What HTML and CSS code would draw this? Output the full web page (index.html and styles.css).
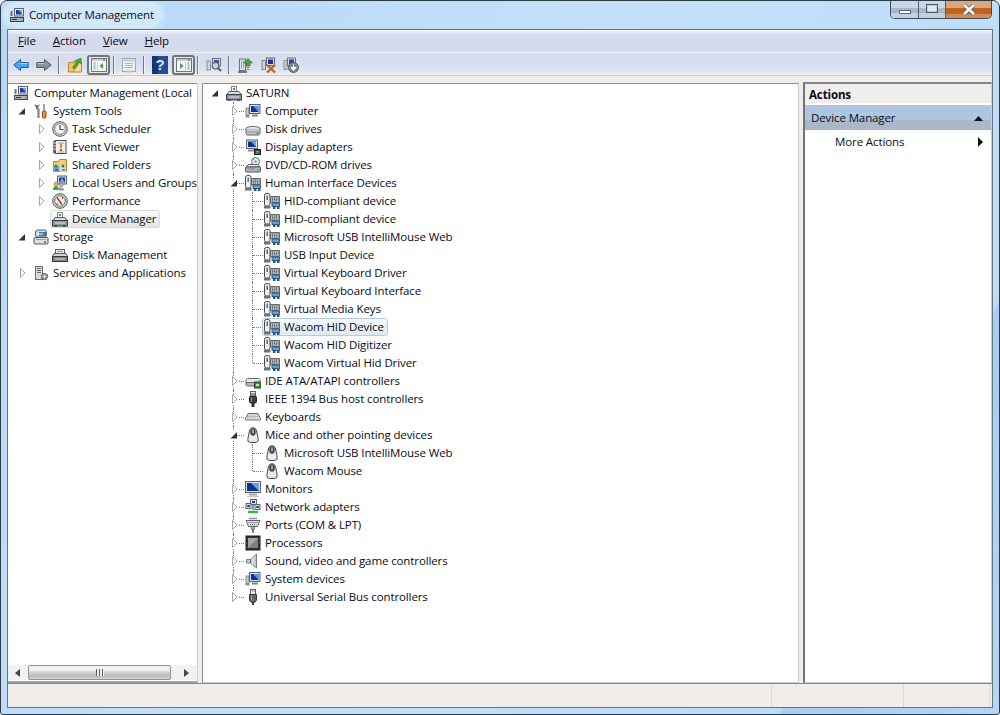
FILE: index.html
```html
<!DOCTYPE html>
<html lang="en">
<head>
<meta charset="utf-8">
<title>Computer Management</title>
<link rel="stylesheet" href="styles.css">
</head>
<body>
<svg class="defs" aria-hidden="true">
  <symbol id="exp-closed" viewBox="0 0 7 10"><path d="M1.5 .5v9l4.5-4.5z" fill="#fff" stroke="#a6a6a6"/></symbol>
  <symbol id="exp-open" viewBox="0 0 7 10"><path d="M7 2v6.5H.5z" fill="#333"/></symbol>
  <symbol id="i-pc" viewBox="0 0 16 16"><rect x="5.5" y="1.5" width="9" height="7.500" fill="#e6eaee" stroke="#5a6570"/><rect x="7" y="3" width="6" height="4.500" fill="#1b3da0"/><path d="M9 3h4v4z" fill="#6ea6e4"/><rect x="1.500" y="10.500" width="13" height="4" fill="#b0b4b8" stroke="#3c4248"/><path d="M3 12.500h5" stroke="#30353a"/><path d="M12 12.500h1" stroke="#4fbe4f"/><path d="M2.500 4v5" stroke="#6b7b6b" stroke-width="2"/></symbol>
  <symbol id="i-tools" viewBox="0 0 16 16"><path d="M4 2v3l1.500 1.500V15" fill="none" stroke="#7b838b" stroke-width="2.200"/><path d="M2 1.500 4 5 6.500 1.500" fill="none" stroke="#555d65"/><path d="M11 1v7" stroke="#8b9096" stroke-width="1.600"/><rect x="9.500" y="8" width="3.500" height="7" rx="1" fill="#ea962f" stroke="#8a4f10"/></symbol>
  <symbol id="i-clock" viewBox="0 0 16 16"><circle cx="8" cy="8" r="7.300" fill="#c8ced3" stroke="#565c62"/><circle cx="8" cy="8" r="5.300" fill="#f6f3e9" stroke="#8a8f94"/><path d="M8 4v4.500h3.500" fill="none" stroke="#4a4f55" stroke-width="1.200"/></symbol>
  <symbol id="i-viewer" viewBox="0 0 16 16"><rect x="3" y="1.500" width="11" height="13" fill="#eef0f2" stroke="#4a5058"/><rect x="1" y="2" width="3" height="12" fill="#5c6670"/><path d="M1 4h3M1 7h3M1 10h3" stroke="#d9dde0"/><path d="M6 4h6M6 13h6" stroke="#a0a6ac"/><path d="M9 4.500v4.500" stroke="#e08a1e" stroke-width="2"/><rect x="8" y="10" width="2" height="2" fill="#c8451b"/></symbol>
  <symbol id="i-share" viewBox="0 0 16 16"><path d="M1.500 4.500h5l1-2h7v12h-13z" fill="#f2cd6f" stroke="#ab8331"/><rect x="1" y="9" width="6" height="6" fill="#5fa8d8"/><rect x="8" y="9" width="6" height="6" fill="#e8d9a8"/><circle cx="4" cy="9" r="1.500" fill="#3e7f3e"/><circle cx="11" cy="9" r="1.500" fill="#2f6fa8"/><path d="M3 13h3M10 13h3" stroke="#1b4060"/></symbol>
  <symbol id="i-users" viewBox="0 0 16 16"><rect x="5.500" y="1" width="9" height="8" fill="#d5dade" stroke="#5a6570"/><rect x="7" y="2.500" width="6" height="5" fill="#1b3da0"/><path d="M7 7.500 10 3l3 4.500" fill="#6ea6e4"/><circle cx="4" cy="9" r="2" fill="#e3b58c" stroke="#7a5a3a" stroke-width=".5"/><path d="M1 15c0-3 1-4 3-4s3 1 3 4z" fill="#4a9a52"/><circle cx="9" cy="10" r="2" fill="#e3b58c" stroke="#7a5a3a" stroke-width=".5"/><path d="M6 15.500c0-2 1-3 3-3s3 1 3 3z" fill="#8a9cb4"/></symbol>
  <symbol id="i-perf" viewBox="0 0 16 16"><circle cx="8" cy="8" r="7.300" fill="#d7dadd" stroke="#4f555b"/><circle cx="8" cy="8" r="5.300" fill="#f4efe4" stroke="#6e747a"/><path d="M5 4.500 10 11.500" stroke="#b23a22" stroke-width="1.500"/><path d="M10.500 4v2M5 10v2" stroke="#555"/></symbol>
  <symbol id="i-dev" viewBox="0 0 16 16"><rect x="5.500" y="1.500" width="5" height="5" fill="#f4f6f4" stroke="#7c8a80"/><path d="M7 3h2v2H7z" fill="#3fa34d"/><path d="M3 6.500h10l2 3h-14z" fill="#d9dce0" stroke="#5c6268"/><rect x=".5" y="9.500" width="15" height="5.500" fill="#8f959b" stroke="#3b4046"/><path d="M3 12h10" stroke="#e0e3e6"/><path d="M2 15h3M11 15h3" stroke="#222" stroke-width="1.200"/></symbol>
  <symbol id="i-storage" viewBox="0 0 16 16"><rect x="2.500" y="1" width="11" height="7" rx="2" fill="#cfd6dc" stroke="#5b646c"/><path d="M6 3h7v4H6z" fill="#2f7fcf"/><path d="M4 5h6" stroke="#fff"/><rect x="1" y="8.500" width="14" height="6.500" rx="1" fill="#dde0e3" stroke="#4f565c"/><path d="M3 10.500h10" stroke="#9aa0a6"/><rect x="11" y="12" width="2" height="2" fill="#3fa34d"/></symbol>
  <symbol id="i-diskm" viewBox="0 0 16 16"><rect x="3.500" y="2.500" width="9" height="4" fill="#eceef0" stroke="#555c62"/><path d="M5 4.500h6" stroke="#9aa0a6"/><path d="M2 6.500h12l1.500 3H.5z" fill="#d2d5d8" stroke="#50565c"/><rect x=".5" y="9.500" width="15" height="5" fill="#7d8288" stroke="#33383d"/><path d="M3 12h10" stroke="#dfe2e5"/></symbol>
  <symbol id="i-services" viewBox="0 0 16 16"><rect x="2.500" y="1.500" width="7" height="13" fill="#d8dcdf" stroke="#646a70"/><path d="M4 3.500h4M4 5.500h4M4 7.500h4" stroke="#5f656b"/><circle cx="11.500" cy="11.500" r="3" fill="#a4a9ae" stroke="#53585d" stroke-width="1.500" stroke-dasharray="1.500 .8"/><circle cx="11.500" cy="11.500" r="1" fill="#fff"/></symbol>
  <symbol id="i-computer" viewBox="0 0 16 16"><rect x="4.500" y="1.500" width="10.500" height="9" fill="#dfe3e6" stroke="#59626b"/><rect x="6" y="3" width="7.500" height="6" fill="#0e2f9a"/><path d="M8 3h5.500v6z" fill="#5d97de"/><path d="M7 12.500h6" stroke="#7f868c" stroke-width="2"/><rect x="1" y="5" width="3" height="9" fill="#c8cdd1" stroke="#5d6369" stroke-width=".7"/><rect x="1.500" y="12" width="2" height="1.500" fill="#3fa34d"/></symbol>
  <symbol id="i-disk" viewBox="0 0 16 16"><ellipse cx="8" cy="7.500" rx="7" ry="2" fill="#eef0f2" stroke="#5f666c"/><path d="M1 7.500v5c0 1 1 1.500 2 1.500h10c1 0 2-.5 2-1.500v-5" fill="#c3c8cd" stroke="#5f666c"/><path d="M2 11h12" stroke="#8d9399"/><rect x="11.500" y="11.500" width="2" height="2" fill="#4ab05a"/></symbol>
  <symbol id="i-display" viewBox="0 0 16 16"><rect x="1.500" y="1" width="11" height="8.500" fill="#dfe3e6" stroke="#5b646c"/><rect x="3" y="2.500" width="8" height="5.500" fill="#0e2f9a"/><path d="M6 2.500h5V8z" fill="#6ba2e2"/><path d="M3 11.500h7" stroke="#8a9096" stroke-width="2"/><rect x="9.500" y="10.500" width="6" height="5" fill="#3c4b40" stroke="#1f2622"/><path d="M11 12.500h3M11 14h3" stroke="#57c06b"/></symbol>
  <symbol id="i-dvd" viewBox="0 0 16 16"><circle cx="10.500" cy="4.500" r="4" fill="#e4e8ea" stroke="#6a7178"/><circle cx="10.500" cy="4.500" r="1.200" fill="#59b0d8"/><path d="M8 2.500l2-1" stroke="#62b56b"/><path d="M3 7.500h10l2 2.500H1z" fill="#e8eaec" stroke="#5c6268"/><rect x=".5" y="10" width="15" height="5" rx="1" fill="#b9bec3" stroke="#4a5056"/><path d="M2 12h8" stroke="#70767c"/><rect x="12" y="12" width="2" height="1.500" fill="#3fa34d"/></symbol>
  <symbol id="i-hid" viewBox="0 0 16 16"><rect x=".5" y=".5" width="5.500" height="12.500" rx="1.800" fill="#f0f1f3" stroke="#44494f"/><path d="M3.200 2.500v4.500" stroke="#5f666d" stroke-width="1.500"/><rect x="0" y="13" width="6.500" height="2.500" fill="#6d7278"/><path d="M6.500 3.500h9v6h-9z" fill="#b4b8bc" stroke="#62686e"/><path d="M8 5h6.500M8 6.500h6.500M8 8h6.500" stroke="#565c62" stroke-dasharray="1 1"/><path d="M8 10h7.500v3.500H8z" fill="#6f9dc7" stroke="#285a8a"/><rect x="9" y="13.500" width="2.500" height="2.500" fill="#23537f"/><rect x="13" y="13.500" width="2.500" height="2.500" fill="#23537f"/></symbol>
  <symbol id="i-ide" viewBox="0 0 16 16"><path d="M1 7.500C1 6 2 5.500 3 5.500h10c1 0 2 .5 2 2v2H1z" fill="#e8ebee" stroke="#636a70"/><path d="M1 9.500h14v2c0 1-1 1.500-2 1.500H3c-1 0-2-.5-2-1.500z" fill="#b5babf" stroke="#636a70"/><rect x="9.500" y="9" width="6.500" height="6" fill="#3d9048" stroke="#1f4a26"/><path d="M11 11h3v2h-3z" fill="#d4e8a0"/></symbol>
  <symbol id="i-1394" viewBox="0 0 16 16"><rect x="5.500" y=".5" width="5" height="5" fill="#e3e6e8" stroke="#5a6066"/><path d="M7 2v2M9 2v2" stroke="#44494e"/><rect x="4.500" y="5" width="7" height="7" rx="1.500" fill="#3a3f44" stroke="#1f2327"/><path d="M6.500 6v5" stroke="#8d9399"/><path d="M8 12v4" stroke="#2f3338" stroke-width="3"/></symbol>
  <symbol id="i-kbd" viewBox="0 0 16 16"><path d="M3 4.500h10l2.500 5v1.500H.5V9.500z" fill="#eaecee" stroke="#6a7076"/><path d="M3.500 6h9M2.500 7.500h11M1.800 9h12.400" stroke="#868c92" stroke-dasharray="1 1"/></symbol>
  <symbol id="i-mouse" viewBox="0 0 16 16"><path d="M8 .8C5 .8 4.500 3 4 6 3.500 9 2.500 12 3 14c.3 1 1.500 1.500 5 1.500s4.700-.5 5-1.500c.5-2-.5-5-1-8C11.500 3 11 .8 8 .8z" fill="#e9ebed" stroke="#393e44"/><ellipse cx="8" cy="5" rx="2.800" ry="3.800" fill="#3f444a"/><path d="M8 2.500v4" stroke="#c9cdd1" stroke-width="1.400"/></symbol>
  <symbol id="i-monitor" viewBox="0 0 16 16"><rect x=".5" y=".5" width="15" height="11" fill="#dde1e4" stroke="#5b646c"/><rect x="2" y="2" width="12" height="8" fill="#0e2f9a"/><path d="M6 2h8v8z" fill="#6ba2e2"/><path d="M4 13.500h8" stroke="#9aa0a6" stroke-width="2"/><path d="M2 15.500h12" stroke="#c5c9cd"/></symbol>
  <symbol id="i-net" viewBox="0 0 16 16"><rect x="5.500" y=".5" width="6" height="5" fill="#dde1e4" stroke="#5b646c"/><rect x="7" y="2" width="3" height="2" fill="#1b3da0"/><rect x="1" y="4.500" width="5" height="5" fill="#dde1e4" stroke="#5b646c"/><rect x="2.300" y="6" width="2.500" height="2" fill="#1b3da0"/><rect x="10" y="5.500" width="5" height="5" fill="#dde1e4" stroke="#5b646c"/><rect x="11.300" y="7" width="2.500" height="2" fill="#1b3da0"/><path d="M8 6v5" stroke="#3d9a45" stroke-width="1.500"/><path d="M3 13h10" stroke="#3db34a" stroke-width="2.500"/></symbol>
  <symbol id="i-ports" viewBox="0 0 16 16"><path d="M1 3.500h14l-2.500 6h-9z" fill="#d9dde0" stroke="#5d646a"/><path d="M3.500 5.500h9M5 7.500h6" stroke="#5d646a" stroke-dasharray="1 1"/><rect x="6.500" y="9.500" width="3" height="3" fill="#a8adb2" stroke="#5d646a" stroke-width=".7"/><path d="M8 12.500V16" stroke="#4d5359" stroke-width="1.500"/><path d="M4 1.500h8" stroke="#8d9399" stroke-width="1.500"/></symbol>
  <symbol id="i-cpu" viewBox="0 0 16 16"><rect x="1" y="1" width="14" height="14" fill="#2f3235" stroke="#1a1c1e"/><rect x="3" y="3" width="10" height="10" fill="#a4a8ac"/><path d="M3 13 13 3v10z" fill="#7b7f83"/><path d="M.5 4h1M.5 8h1M.5 12h1M14.500 4h1M14.500 8h1M14.500 12h1" stroke="#c89a30"/></symbol>
  <symbol id="i-sound" viewBox="0 0 16 16"><path d="M1.500 6.500h4l6-5.500v14l-6-5h-4z" fill="#c5cace" stroke="#777d83"/><path d="M5.500 6.500v3.500" stroke="#5f656b"/><path d="M8 4v8" stroke="#eef0f2"/></symbol>
  <symbol id="i-usb" viewBox="0 0 16 16"><rect x="5.500" y=".5" width="5" height="5" fill="#e9ecee" stroke="#5a6066"/><path d="M7 2h.8M8.800 2h.8" stroke="#44494e"/><path d="M4.500 5.500h7v6l-2 2h-3l-2-2z" fill="#62676c" stroke="#33373b"/><path d="M8 13v3" stroke="#3a3e42" stroke-width="2"/><path d="M6.500 6.500v5" stroke="#a1a6ab"/></symbol>
  <symbol id="t-back" viewBox="0 0 16 16"><path d="M.8 8 7.500 2.500V5.500h7.700v5H7.500v3z" fill="#4aa3ee" stroke="#1b5faa"/><path d="M7 6.500h7.500" stroke="#a8d8fb" stroke-width="1.200"/></symbol>
  <symbol id="t-fwd" viewBox="0 0 16 16"><path d="M15.200 8 8.500 2.500V5.500H.8v5h7.700v3z" fill="#8f9397" stroke="#54585c"/><path d="M1.500 6.500h7" stroke="#c1c4c7" stroke-width="1.200"/></symbol>
  <symbol id="t-up" viewBox="0 0 16 16"><path d="M1.500 5.500h4l1-1.500h2v11H1.500z" fill="#f2c46c" stroke="#b88a36"/><path d="M7 5.500h7.500v9.500H7z" fill="#f8d98e" stroke="#b88a36"/><path d="M5.500 10.500 10 5 8.500 3.500 14 1l.5 6-2-1.500L8 12z" fill="#4aa63c" stroke="#2c6e24" stroke-width=".5"/></symbol>
  <symbol id="t-left" viewBox="0 0 16 14"><rect x=".5" y=".5" width="15" height="13" fill="#f5f7f9" stroke="#6e7479"/><path d="M1 1h14v2H1z" fill="#c8ccd0"/><path d="M12 2h2" stroke="#555"/><path d="M2.500 5h2M2.500 7h2M2.500 9h2M2.500 11h2" stroke="#5490c8" stroke-width="1.200"/><path d="M6.500 4.500v8" stroke="#c0c4c8"/><path d="M12 5v6L8.500 8z" fill="#3aa14a"/></symbol>
  <symbol id="t-right" viewBox="0 0 16 14"><rect x=".5" y=".5" width="15" height="13" fill="#f5f7f9" stroke="#6e7479"/><path d="M1 1h14v2H1z" fill="#c8ccd0"/><path d="M12 2h2" stroke="#555"/><path d="M11.500 5h2M11.500 7h2M11.500 9h2M11.500 11h2" stroke="#5490c8" stroke-width="1.200"/><path d="M9.500 4.500v8" stroke="#c0c4c8"/><path d="M4 5v6l3.500-3z" fill="#3aa14a"/></symbol>
  <symbol id="t-export" viewBox="0 0 16 16"><rect x="1.500" y="1.500" width="13" height="13" fill="#eef0f2" stroke="#a2a7ac"/><path d="M1.500 3.500h13" stroke="#c7cbcf" stroke-width="2"/><path d="M4 6.500h8M4 8.500h8M4 10.500h8" stroke="#b1b6bb"/><path d="M5 14.500h6" stroke="#bfc3c7" stroke-width="2"/></symbol>
  <symbol id="t-scan" viewBox="0 0 16 16"><rect x="6.500" y="1.500" width="8" height="7.500" fill="#d8dde2" stroke="#6a7076"/><rect x="8" y="3" width="5" height="4.500" fill="#2a58b0"/><rect x="1" y="4" width="3.500" height="9" fill="#cfd3d7" stroke="#7b8187" stroke-width=".8"/><circle cx="9.500" cy="8.500" r="3.300" fill="#cfe4f5" fill-opacity=".7" stroke="#59636d" stroke-width="1.200"/><path d="M12 11l3 3" stroke="#50565c" stroke-width="1.800"/></symbol>
  <symbol id="t-update" viewBox="0 0 16 16"><rect x="2.500" y="2" width="6" height="11.500" fill="#e4e7e9" stroke="#6a7076"/><path d="M4.500 3.500v8M6.500 3.500v8" stroke="#9aa0a6"/><path d="M1 15h9" stroke="#4d5359" stroke-width="1.600"/><path d="M11 1.500 15.500 6H13v3h-4V6H6.500z" fill="#4aa63c" stroke="#2c6e24" stroke-width=".6"/><path d="M9.500 10.500h3M9.500 12.500h3" stroke="#4aa63c"/></symbol>
  <symbol id="t-remove" viewBox="0 0 16 16"><rect x="5.500" y="1" width="8" height="7.500" fill="#d8dde2" stroke="#5f666c"/><rect x="7" y="2.500" width="5" height="4.500" fill="#143a9c"/><rect x="1" y="3.500" width="3.500" height="9" fill="#cfd3d7" stroke="#6a7076" stroke-width=".8"/><path d="M6 8l8 7.500M14 8l-8 7.500" stroke="#cf5a20" stroke-width="2.200"/></symbol>
  <symbol id="t-roll" viewBox="0 0 16 16"><rect x="4.500" y="1" width="8" height="7.500" fill="#d8dde2" stroke="#6a7076"/><rect x="6" y="2.500" width="5" height="4.500" fill="#1c46a8"/><rect x="1" y="3.500" width="3" height="9" fill="#cfd3d7" stroke="#7b8187" stroke-width=".8"/><circle cx="10.500" cy="10.500" r="5" fill="#83888d" stroke="#595e63"/><path d="M10.500 7.500v3.500M8 10.500l2.500 3 2.500-3z" fill="#fff" stroke="#fff"/></symbol>
</svg>

<div class="window">
  <header class="titlebar">
    <div class="title"><svg class="ico"><use href="#i-pc"/></svg><span>Computer Management</span></div>
    <div class="caption">
      <div class="cap cap-min"><span class="glyph-min"></span></div>
      <div class="cap cap-max"><span class="glyph-max"></span></div>
      <div class="cap cap-close"><svg class="glyph-close" viewBox="0 0 14 11"><path d="M2 1l10 9M12 1 2 10" stroke="#59626b" stroke-width="4"/><path d="M2 1l10 9M12 1 2 10" stroke="#fff" stroke-width="2.400"/></svg></div>
    </div>
  </header>

  <div class="client">
    <nav class="menubar">
      <span class="menu"><u>F</u>ile</span>
      <span class="menu"><u>A</u>ction</span>
      <span class="menu"><u>V</u>iew</span>
      <span class="menu"><u>H</u>elp</span>
    </nav>

    <div class="toolbar">
      <svg class="ico"><use href="#t-back"/></svg>
      <svg class="ico ml7"><use href="#t-fwd"/></svg>
      <span class="sep"></span>
      <svg class="ico"><use href="#t-up"/></svg>
      <span class="toggle ml4"><svg class="tgl-ico"><use href="#t-left"/></svg></span>
      <span class="sep sep-a"></span>
      <svg class="ico"><use href="#t-export"/></svg>
      <span class="sep"></span>
      <span class="help">?</span>
      <span class="toggle ml4"><svg class="tgl-ico"><use href="#t-right"/></svg></span>
      <span class="sep sep-b"></span>
      <svg class="ico"><use href="#t-scan"/></svg>
      <span class="sep"></span>
      <svg class="ico"><use href="#t-update"/></svg>
      <svg class="ico ml8"><use href="#t-remove"/></svg>
      <svg class="ico ml6"><use href="#t-roll"/></svg>
    </div>

    <main class="panes">
      <section class="pane pane-left">
        <div class="treewrap">
          <ul class="tree">
            <li>
              <div class="row row-root"><span class="item"><svg class="ico"><use href="#i-pc"/></svg><span class="label">Computer Management (Local</span></span></div>
              <ul class="sub sub-first">
                <li>
                  <div class="row"><span class="exp exp-o"><svg><use href="#exp-open"/></svg></span><span class="item"><svg class="ico"><use href="#i-tools"/></svg><span class="label">System Tools</span></span></div>
                  <ul class="sub">
                    <li><div class="row"><span class="exp"><svg><use href="#exp-closed"/></svg></span><span class="item"><svg class="ico"><use href="#i-clock"/></svg><span class="label">Task Scheduler</span></span></div></li>
                    <li><div class="row"><span class="exp"><svg><use href="#exp-closed"/></svg></span><span class="item"><svg class="ico"><use href="#i-viewer"/></svg><span class="label">Event Viewer</span></span></div></li>
                    <li><div class="row"><span class="exp"><svg><use href="#exp-closed"/></svg></span><span class="item"><svg class="ico"><use href="#i-share"/></svg><span class="label">Shared Folders</span></span></div></li>
                    <li><div class="row"><span class="exp"><svg><use href="#exp-closed"/></svg></span><span class="item"><svg class="ico"><use href="#i-users"/></svg><span class="label">Local Users and Groups</span></span></div></li>
                    <li><div class="row"><span class="exp"><svg><use href="#exp-closed"/></svg></span><span class="item"><svg class="ico"><use href="#i-perf"/></svg><span class="label">Performance</span></span></div></li>
                    <li><div class="row"><span class="exp"></span><span class="item sel-grey"><svg class="ico"><use href="#i-dev"/></svg><span class="label">Device Manager</span></span></div></li>
                  </ul>
                </li>
                <li>
                  <div class="row"><span class="exp exp-o"><svg><use href="#exp-open"/></svg></span><span class="item"><svg class="ico"><use href="#i-storage"/></svg><span class="label">Storage</span></span></div>
                  <ul class="sub">
                    <li><div class="row"><span class="exp"></span><span class="item"><svg class="ico"><use href="#i-diskm"/></svg><span class="label">Disk Management</span></span></div></li>
                  </ul>
                </li>
                <li><div class="row"><span class="exp"><svg><use href="#exp-closed"/></svg></span><span class="item"><svg class="ico"><use href="#i-services"/></svg><span class="label">Services and Applications</span></span></div></li>
              </ul>
            </li>
          </ul>
        </div>
        <div class="hscroll">
          <svg class="sb-arrow" viewBox="0 0 5 8"><path d="M5 0v8L0 4z" fill="#444"/></svg>
          <div class="sb-thumb"><span class="sb-grip"></span></div>
          <svg class="sb-arrow" viewBox="0 0 5 8"><path d="M0 0v8l5-4z" fill="#444"/></svg>
        </div>
      </section>

      <section class="pane pane-mid">
        <ul class="tree tree-lines">
          <li class="saturn">
            <div class="row"><span class="exp exp-o"><svg><use href="#exp-open"/></svg></span><span class="item"><svg class="ico"><use href="#i-dev"/></svg><span class="label">SATURN</span></span></div>
            <ul class="sub">
              <li><div class="row"><span class="exp"><svg><use href="#exp-closed"/></svg></span><span class="item"><svg class="ico"><use href="#i-computer"/></svg><span class="label">Computer</span></span></div></li>
              <li><div class="row"><span class="exp"><svg><use href="#exp-closed"/></svg></span><span class="item"><svg class="ico"><use href="#i-disk"/></svg><span class="label">Disk drives</span></span></div></li>
              <li><div class="row"><span class="exp"><svg><use href="#exp-closed"/></svg></span><span class="item"><svg class="ico"><use href="#i-display"/></svg><span class="label">Display adapters</span></span></div></li>
              <li><div class="row"><span class="exp"><svg><use href="#exp-closed"/></svg></span><span class="item"><svg class="ico"><use href="#i-dvd"/></svg><span class="label">DVD/CD-ROM drives</span></span></div></li>
              <li>
                <div class="row"><span class="exp exp-o"><svg><use href="#exp-open"/></svg></span><span class="item"><svg class="ico"><use href="#i-hid"/></svg><span class="label">Human Interface Devices</span></span></div>
                <ul class="sub">
                  <li><div class="row"><span class="exp"></span><span class="item"><svg class="ico"><use href="#i-hid"/></svg><span class="label">HID-compliant device</span></span></div></li>
                  <li><div class="row"><span class="exp"></span><span class="item"><svg class="ico"><use href="#i-hid"/></svg><span class="label">HID-compliant device</span></span></div></li>
                  <li><div class="row"><span class="exp"></span><span class="item"><svg class="ico"><use href="#i-hid"/></svg><span class="label">Microsoft USB IntelliMouse Web</span></span></div></li>
                  <li><div class="row"><span class="exp"></span><span class="item"><svg class="ico"><use href="#i-hid"/></svg><span class="label">USB Input Device</span></span></div></li>
                  <li><div class="row"><span class="exp"></span><span class="item"><svg class="ico"><use href="#i-hid"/></svg><span class="label">Virtual Keyboard Driver</span></span></div></li>
                  <li><div class="row"><span class="exp"></span><span class="item"><svg class="ico"><use href="#i-hid"/></svg><span class="label">Virtual Keyboard Interface</span></span></div></li>
                  <li><div class="row"><span class="exp"></span><span class="item"><svg class="ico"><use href="#i-hid"/></svg><span class="label">Virtual Media Keys</span></span></div></li>
                  <li><div class="row"><span class="exp"></span><span class="item sel-blue"><svg class="ico"><use href="#i-hid"/></svg><span class="label">Wacom HID Device</span></span></div></li>
                  <li><div class="row"><span class="exp"></span><span class="item"><svg class="ico"><use href="#i-hid"/></svg><span class="label">Wacom HID Digitizer</span></span></div></li>
                  <li><div class="row"><span class="exp"></span><span class="item"><svg class="ico"><use href="#i-hid"/></svg><span class="label">Wacom Virtual Hid Driver</span></span></div></li>
                </ul>
              </li>
              <li><div class="row"><span class="exp"><svg><use href="#exp-closed"/></svg></span><span class="item"><svg class="ico"><use href="#i-ide"/></svg><span class="label">IDE ATA/ATAPI controllers</span></span></div></li>
              <li><div class="row"><span class="exp"><svg><use href="#exp-closed"/></svg></span><span class="item"><svg class="ico"><use href="#i-1394"/></svg><span class="label">IEEE 1394 Bus host controllers</span></span></div></li>
              <li><div class="row"><span class="exp"><svg><use href="#exp-closed"/></svg></span><span class="item"><svg class="ico"><use href="#i-kbd"/></svg><span class="label">Keyboards</span></span></div></li>
              <li>
                <div class="row"><span class="exp exp-o"><svg><use href="#exp-open"/></svg></span><span class="item"><svg class="ico"><use href="#i-mouse"/></svg><span class="label">Mice and other pointing devices</span></span></div>
                <ul class="sub">
                  <li><div class="row"><span class="exp"></span><span class="item"><svg class="ico"><use href="#i-mouse"/></svg><span class="label">Microsoft USB IntelliMouse Web</span></span></div></li>
                  <li><div class="row"><span class="exp"></span><span class="item"><svg class="ico"><use href="#i-mouse"/></svg><span class="label">Wacom Mouse</span></span></div></li>
                </ul>
              </li>
              <li><div class="row"><span class="exp"><svg><use href="#exp-closed"/></svg></span><span class="item"><svg class="ico"><use href="#i-monitor"/></svg><span class="label">Monitors</span></span></div></li>
              <li><div class="row"><span class="exp"><svg><use href="#exp-closed"/></svg></span><span class="item"><svg class="ico"><use href="#i-net"/></svg><span class="label">Network adapters</span></span></div></li>
              <li><div class="row"><span class="exp"><svg><use href="#exp-closed"/></svg></span><span class="item"><svg class="ico"><use href="#i-ports"/></svg><span class="label">Ports (COM &amp; LPT)</span></span></div></li>
              <li><div class="row"><span class="exp"><svg><use href="#exp-closed"/></svg></span><span class="item"><svg class="ico"><use href="#i-cpu"/></svg><span class="label">Processors</span></span></div></li>
              <li><div class="row"><span class="exp"><svg><use href="#exp-closed"/></svg></span><span class="item"><svg class="ico"><use href="#i-sound"/></svg><span class="label">Sound, video and game controllers</span></span></div></li>
              <li><div class="row"><span class="exp"><svg><use href="#exp-closed"/></svg></span><span class="item"><svg class="ico"><use href="#i-computer"/></svg><span class="label">System devices</span></span></div></li>
              <li><div class="row"><span class="exp"><svg><use href="#exp-closed"/></svg></span><span class="item"><svg class="ico"><use href="#i-usb"/></svg><span class="label">Universal Serial Bus controllers</span></span></div></li>
            </ul>
          </li>
        </ul>
      </section>

      <aside class="pane pane-right">
        <div class="act-head">Actions</div>
        <div class="act-group"><span>Device Manager</span><svg class="act-up" viewBox="0 0 9 5"><path d="M4.500 0 9 5H0z" fill="#111"/></svg></div>
        <div class="act-item"><span>More Actions</span><svg class="act-more" viewBox="0 0 5 10"><path d="M0 0l5 5-5 5z" fill="#111"/></svg></div>
      </aside>
    </main>

    <footer class="status">
      <span class="st st-a"></span>
      <span class="st st-b"></span>
      <span class="st st-c"></span>
    </footer>
  </div>
</div>
</body>
</html>
```

FILE: styles.css
```css
* { box-sizing: border-box; }
html, body { margin: 0; height: 100%; background: #fff; }
body { font: 11.5px/18px "Open Sans", "Noto Sans", sans-serif; letter-spacing: -.11px; color: #0a0a14; overflow: hidden; }
.defs { width: 0; height: 0; position: absolute; }
ul { list-style: none; margin: 0; padding: 0; }
.ico { width: 16px; height: 16px; flex: none; display: block; }

.window {
  width: 1000px; height: 715px;
  display: flex; flex-direction: column;
  border: 1px solid #2e3a46;
  border-radius: 7px 7px 3px 3px;
  background: linear-gradient(118deg, #b6d8f7 0, #c4e0f9 45%, #bcdcf8 84%, #a7cdf3 84.2%, #b5d6f6 100%);
  overflow: hidden;
}
.titlebar { height: 28px; flex: none; display: flex; justify-content: space-between; align-items: flex-start; padding-right: 7px; }
.title {
  display: flex; align-items: center; gap: 4px;
  height: 26px; margin: 1px 0 0 3px; padding: 0 8px 0 5px;
  border-radius: 14px;
  background: rgba(218, 238, 252, .75);
  box-shadow: 0 0 6px 2px rgba(218, 238, 252, .75);
  color: #0c0c14;
  letter-spacing: -.18px;
}
.caption { display: flex; height: 19px; margin-top: -1px; border: 1px solid #3f4c58; border-top: 0; border-radius: 0 0 5px 5px; overflow: hidden; }
.cap { display: flex; align-items: center; justify-content: center; height: 100%; border-left: 1px solid #4f5d6a; }
.cap-min { width: 27px; border-left: 0; padding-top: 5px; background: linear-gradient(#c9d8e8 0 44%, #a9b7c8 44% 70%, #c2d0df 70%); }
.cap-max { width: 27px; padding-bottom: 1px; background: linear-gradient(#c9d8e8 0 44%, #a9b7c8 44% 70%, #c2d0df 70%); }
.cap-close { width: 46px; background: linear-gradient(#dca678 0 46%, #bf6420 46% 80%, #cd8a56 80%); }
.glyph-min { width: 12px; height: 4px; background: #fff; border: 1px solid #5b6874; }
.glyph-max { width: 12px; height: 9px; background: #dfe8f1; border: 1px solid #4d5a66; box-shadow: inset 0 0 0 1px #c0cdd9; }
.glyph-close { width: 14px; height: 11px; }

.client {
  flex: 1; min-height: 0; margin: 0 6px 6px 6px;
  display: flex; flex-direction: column;
  border: 1px solid #66747f;
  background: #f0edeb;
}
.menubar {
  height: 23px; flex: none;
  display: flex; align-items: center; gap: 17px; padding: 0 0 1px 10px;
  background: linear-gradient(#f6f8fb 0, #d4dbec 5px, #d4dbec 100%);
  border-bottom: 1px solid #eef1f8;
}
.toolbar {
  height: 23px; flex: none;
  display: flex; align-items: center; padding: 2px 0 0 5px;
  background: linear-gradient(#d6ddee 0, #d6ddee 50%, #dde3f1 80%, #eff0f4 100%);
  border-bottom: 1px solid #c8ccd2;
}
.ml4 { margin-left: 4px; }
.ml6 { margin-left: 6px; }
.ml7 { margin-left: 7px; }
.ml8 { margin-left: 8px; }
.sep { width: 1px; height: 18px; background: #71787f; box-shadow: 1px 0 0 #eef1f6; margin: 0 8px 0 6px; flex: none; }
.sep-a { margin: 0 7px 0 3px; }
.sep-b { margin: 0 8px 0 2px; }
.toggle {
  width: 23px; height: 20px; flex: none;
  display: flex; align-items: center; justify-content: center;
  border: 2px solid #6f757b; border-radius: 3px;
  background: #e6e9ef;
}
.tgl-ico { width: 16px; height: 14px; display: block; }
.help {
  width: 16px; height: 18px; flex: none; text-align: center;
  font: bold 15px/18px "Liberation Sans", sans-serif; color: #dfe4ec;
  background: linear-gradient(90deg, #14366f 0 40%, #1f4f96 40%);
}

.panes { flex: 1; min-height: 0; display: flex; padding-top: 7px; border-bottom: 1px solid #7f868c; }
.pane { background: #fff; min-height: 0; border-top: 1px solid #8b8f93; }
.pane-left { width: 190px; flex: none; display: flex; flex-direction: column; border-right: 1px solid #cfcfcf; border-bottom: 2px solid #a1a4a7; }
.treewrap { flex: 1; min-height: 0; overflow: hidden; }
.pane-mid { width: 597px; flex: none; margin-left: 4px; border-left: 1px solid #8b8f93; border-right: 1px solid #cfcfcf; border-bottom: 1px solid #cfcfcf; padding-left: 4px; overflow: hidden; }
.pane-right { flex: 1; min-width: 0; margin-left: 4px; border-left: 2px solid #6d7680; border-top-width: 2px; border-top-color: #7f858b; border-right: 1px solid #cfcfcf; border-bottom: 1px solid #cfcfcf; margin-top: -1px; }

.tree { white-space: nowrap; }
.row { height: 18px; display: flex; align-items: center; }
.exp { width: 17px; height: 18px; flex: none; padding-left: 5px; display: flex; align-items: center; }
.exp svg { width: 7px; height: 10px; display: block; background: #fff; position: relative; z-index: 1; }
.exp-o { padding-left: 4px; }
.item { display: flex; align-items: center; height: 18px; padding: 0 1px; border: 1px solid transparent; border-radius: 3px; }
.label { margin-left: 4px; padding-right: 2px; }
.row-root { padding-left: 3px; }
.row-root .label { margin-left: 5px; letter-spacing: -.18px; }
.sub { padding-left: 19px; }
.sub-first { padding-left: 6px; }
.sel-grey { border-color: #d9d9d9; background: linear-gradient(#fafafa, #e5e5e5); }
.sel-blue { border-color: #b4cbe0; background: linear-gradient(#f3f8fc, #dfeaf4); }

.tree-lines .sub li { position: relative; }
.tree-lines .sub li::before {
  content: ""; position: absolute; left: 7px; top: 0; bottom: 0;
  border-left: 1px dotted #7b7b7b;
}
.tree-lines .sub li:last-child::before { bottom: auto; height: 9px; }
.tree-lines .sub li::after {
  content: ""; position: absolute; left: 8px; top: 9px; width: 10px;
  border-top: 1px dotted #7b7b7b;
}
.tree-lines .sub li > .row { position: relative; z-index: 1; }

.hscroll { height: 15px; flex: none; margin-bottom: 1px; display: flex; align-items: center; padding: 0 8px 0 7px; background: #f1f1f1; }
.sb-arrow { width: 5px; height: 8px; flex: none; }
.sb-thumb {
  width: 143px; height: 15px; margin: 0 13px 0 8px; flex: none;
  display: flex; align-items: center; justify-content: center;
  border: 1px solid #8f949a; border-radius: 2px;
  background: linear-gradient(#f2f2f2 0 30%, #c9c9c9 55%, #bcbcbc 80%, #d5d8dc 100%);
}
.sb-grip { width: 8px; height: 7px; background: repeating-linear-gradient(90deg, #5b5f63 0 1px, #eee 1px 3px); }

.act-head { height: 19px; padding-left: 4px; line-height: 22px; font-weight: 700; background: #f0edeb; overflow: hidden; }
.act-group {
  height: 25px; margin-top: 2px; padding: 4px 8px 0 6px;
  display: flex; justify-content: space-between;
  background: linear-gradient(#afc6e2 0 62%, #a9b7c8 62%);
}
.act-up { width: 9px; height: 5px; margin-top: 7px; }
.act-item { height: 24px; padding: 0 8px 0 30px; display: flex; justify-content: space-between; align-items: center; }
.act-more { width: 5px; height: 10px; }

.status { height: 23px; flex: none; display: flex; background: #f0edeb; padding-right: 1px; }
.st { border-right: 1px solid #d5daec; height: 100%; }
.st-a { width: 764px; }
.st-b { width: 132px; }
.st-c { width: 86px; }
```
